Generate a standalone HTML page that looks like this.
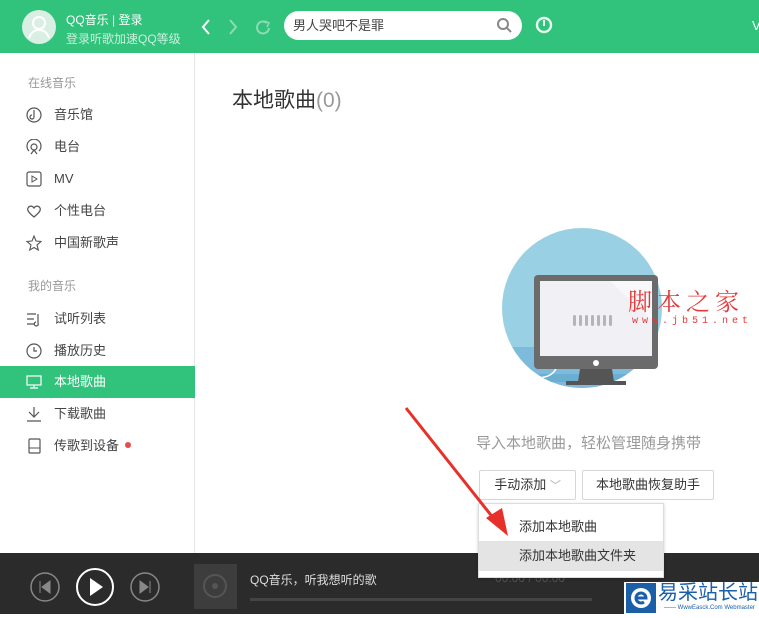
<!DOCTYPE html>
<html><head><meta charset="utf-8"><style>
*{margin:0;padding:0;box-sizing:border-box}
body{width:759px;height:614px;overflow:hidden;position:relative;background:#fff;font-family:"Liberation Sans","Noto Sans CJK SC",sans-serif;color:#333}
.hd{position:absolute;left:0;top:0;width:759px;height:53px;background:#31c27c}
.av{position:absolute;left:22px;top:10px;width:34px;height:34px;border-radius:50%;background:#d9efe4}
.side{position:absolute;left:0;top:53px;width:195px;height:500px;border-right:1px solid #e6e6e6;background:#fff}
.sec{position:absolute;left:28px;font-size:12px;color:#999}
.it{position:absolute;left:0;width:195px;height:32px;font-size:13px;line-height:32px;padding-left:54px;color:#444}
.it svg{position:absolute;left:26px;top:8px}
.act{background:#31c27c;color:#fff}
.ft{position:absolute;left:0;top:553px;width:759px;height:61px;background:#2b2b2b}
.btn{position:absolute;border:1px solid #d6d6d6;border-radius:2px;font-size:13px;line-height:28px;text-align:center;background:#fff;color:#333}
</style></head><body>
<div class="hd">
<div class="av"><svg width="34" height="34"><circle cx="17" cy="13" r="6" fill="none" stroke="#fff" stroke-width="2"/><path d="M7 28c2-6 6-8 10-8s8 2 10 8" fill="none" stroke="#fff" stroke-width="2"/></svg></div>
<div style="position:absolute;left:66px;top:11px;font-size:12px;color:#fff">QQ音乐 | 登录</div>
<div style="position:absolute;left:66px;top:30px;font-size:12px;color:#c8f0dc">登录听歌加速QQ等级</div>
<svg style="position:absolute;left:198px;top:17px" width="80" height="20"><path d="M11 3l-6 7 6 7" fill="none" stroke="#fff" stroke-width="2"/><path d="M32 3l6 7-6 7" fill="none" stroke="#8ddcb5" stroke-width="2"/><path d="M69 6a6 6 0 1 0 2 5" fill="none" stroke="#8ddcb5" stroke-width="2"/><path d="M67 4l4 2-2 4" fill="none" stroke="#8ddcb5" stroke-width="1.5"/></svg>
<div style="position:absolute;left:284px;top:11px;width:238px;height:29px;border-radius:15px;background:#fff;font-size:13px;line-height:29px;padding-left:9px;color:#444">男人哭吧不是罪</div>
<svg style="position:absolute;left:496px;top:17px" width="16" height="16"><circle cx="7" cy="7" r="5" fill="none" stroke="#888" stroke-width="2"/><path d="M11 11l4 4" stroke="#888" stroke-width="2"/></svg>
<svg style="position:absolute;left:535px;top:16px" width="18" height="20"><circle cx="9" cy="9" r="7" fill="none" stroke="#e8fff2" stroke-width="2.4"/><path d="M9 4v6" stroke="#e8fff2" stroke-width="2"/></svg>
<div style="position:absolute;left:752px;top:18px;font-size:13px;color:#fff">V</div>
</div>
<div class="side">
<div class="sec" style="top:21px">在线音乐</div>
<div class="it" style="top:46px"><svg width="16" height="16"><circle cx="8" cy="8" r="7" fill="none" stroke="#555" stroke-width="1.2"/><path d="M8 3v7a2 2 0 1 1-2-2" fill="none" stroke="#555" stroke-width="1.2"/></svg>音乐馆</div>
<div class="it" style="top:78px"><svg width="16" height="16"><path d="M3 12a7 7 0 1 1 10 0" fill="none" stroke="#555" stroke-width="1.2"/><circle cx="8" cy="8" r="3" fill="none" stroke="#555" stroke-width="1.2"/><path d="M5 15l3-4 3 4" fill="none" stroke="#555" stroke-width="1.2"/></svg>电台</div>
<div class="it" style="top:110px"><svg width="16" height="16"><rect x="1" y="1" width="14" height="14" rx="2" fill="none" stroke="#555" stroke-width="1.2"/><path d="M6 5l5 3-5 3z" fill="none" stroke="#555"/></svg>MV</div>
<div class="it" style="top:142px"><svg width="16" height="16"><path d="M8 14C2 9 1 7 2 5s4-3 6 0c2-3 5-2 6 0s0 4-6 9z" fill="none" stroke="#555" stroke-width="1.2"/></svg>个性电台</div>
<div class="it" style="top:174px"><svg width="16" height="16"><path d="M8 1l2 5 5 .5-4 3.5 1.3 5L8 12.5 3.7 15 5 10 1 6.5 6 6z" fill="none" stroke="#555" stroke-width="1.1"/></svg>中国新歌声</div>
<div class="sec" style="top:224px">我的音乐</div>
<div class="it" style="top:250px"><svg width="16" height="16"><path d="M1 3h9M1 8h7M1 13h7M12 3v9a2 2 0 1 1-2-1" fill="none" stroke="#555" stroke-width="1.2"/></svg>试听列表</div>
<div class="it" style="top:282px"><svg width="16" height="16"><circle cx="8" cy="8" r="7" fill="none" stroke="#555" stroke-width="1.2"/><path d="M8 4v4h3" fill="none" stroke="#555" stroke-width="1.2"/></svg>播放历史</div>
<div class="it act" style="top:313px"><svg width="16" height="16"><rect x="1" y="2" width="14" height="9" fill="none" stroke="#fff" stroke-width="1.2"/><path d="M8 11v3M4 14h8" stroke="#fff" stroke-width="1.2"/></svg>本地歌曲</div>
<div class="it" style="top:345px"><svg width="16" height="16"><path d="M8 1v10M3 6l5 5 5-5M1 15h14" fill="none" stroke="#555" stroke-width="1.2"/></svg>下载歌曲</div>
<div class="it" style="top:377px"><svg width="16" height="16"><rect x="3" y="1" width="11" height="14" rx="1" fill="none" stroke="#555" stroke-width="1.2"/><path d="M3 10h11" stroke="#555"/></svg>传歌到设备<span style="display:inline-block;width:6px;height:6px;border-radius:50%;background:#e74c4c;margin-left:6px;vertical-align:2px"></span></div>
</div>
<div style="position:absolute;left:232px;top:84px;font-size:21px;color:#333">本地歌曲<span style="color:#999">(0)</span></div>
<svg style="position:absolute;left:500px;top:227px" width="165" height="165">
<defs><clipPath id="c"><circle cx="82" cy="81" r="80"/></clipPath></defs>
<circle cx="82" cy="81" r="80" fill="#99d0e4"/>
<g clip-path="url(#c)"><rect x="0" y="120" width="165" height="50" fill="#7dbadb"/><path d="M30 155h120l-8-8H40z" fill="#6aaed2"/><path d="M0 148c20 0 40 6 50 0s5-14 10-14" fill="none" stroke="#fff" stroke-width="1.5"/></g>
<rect x="34" y="48" width="124" height="94" rx="4" fill="#6b6b6b"/>
<rect x="40" y="54" width="112" height="75" fill="#f1f1f5"/>
<path d="M110 54h42v40z" fill="#fff" opacity=".5"/>
<g fill="#b5b5b5"><rect x="73" y="88" width="3" height="11" rx="1.5"/><rect x="79" y="88" width="3" height="11" rx="1.5"/><rect x="85" y="88" width="3" height="11" rx="1.5"/><rect x="91" y="88" width="3" height="11" rx="1.5"/><rect x="97" y="88" width="3" height="11" rx="1.5"/><rect x="103" y="88" width="3" height="11" rx="1.5"/><rect x="109" y="88" width="3" height="11" rx="1.5"/></g>
<circle cx="96" cy="136" r="3" fill="#fff"/>
<path d="M80 142h32l2 13H78z" fill="#555"/><rect x="66" y="154" width="60" height="4" fill="#555"/>
</svg>
<div style="position:absolute;left:628px;top:282px;font-size:24px;color:#e23b3b;letter-spacing:5px;font-family:'Noto Serif CJK SC',serif">脚本之家</div>
<div style="position:absolute;left:632px;top:316px;font-size:10px;color:#e23b3b;letter-spacing:4px;font-family:'Liberation Mono',monospace">www.jb51.net</div>
<div style="position:absolute;left:476px;top:432px;font-size:15px;color:#999">导入本地歌曲，轻松管理随身携带</div>
<div class="btn" style="left:479px;top:470px;width:97px;height:30px">手动添加 <span style="color:#aaa;font-size:11px">﹀</span></div>
<div class="btn" style="left:582px;top:470px;width:132px;height:30px">本地歌曲恢复助手</div>
<div class="ft">
<svg style="position:absolute;left:28px;top:14px" width="140" height="40"><circle cx="17" cy="20" r="14" fill="none" stroke="#888" stroke-width="1.5"/><path d="M12 14v12M22 14l-8 6 8 6z" fill="#888" stroke="#888"/><circle cx="67" cy="20" r="18" fill="none" stroke="#fff" stroke-width="2"/><path d="M62 11l13 9-13 9z" fill="#fff"/><circle cx="117" cy="20" r="14" fill="none" stroke="#888" stroke-width="1.5"/><path d="M122 14v12M112 14l8 6-8 6z" fill="#888" stroke="#888"/></svg>
<div style="position:absolute;left:194px;top:11px;width:43px;height:45px;background:#3d3d3d"><svg width="43" height="45"><circle cx="21" cy="22" r="11" fill="none" stroke="#555" stroke-width="2"/><circle cx="21" cy="22" r="3" fill="#555"/></svg></div>
<div style="position:absolute;left:250px;top:18px;font-size:12px;color:#ddd">QQ音乐，听我想听的歌</div>
<div style="position:absolute;left:250px;top:45px;width:342px;height:3px;background:#444"></div>
<div style="position:absolute;left:495px;top:18px;font-size:12px;color:#555">00:00 / 00:00</div>
</div>
<div style="position:absolute;left:478px;top:503px;width:186px;height:75px;background:#fff;border:1px solid #ddd;box-shadow:0 1px 3px rgba(0,0,0,.2)">
<div style="position:absolute;left:40px;top:12px;font-size:13px;color:#333">添加本地歌曲</div>
<div style="position:absolute;left:0;top:37px;width:184px;height:30px;background:#e4e4e4;font-size:13px;line-height:30px;padding-left:40px;color:#333">添加本地歌曲文件夹</div>
</div>
<svg style="position:absolute;left:400px;top:400px" width="120" height="150"><path d="M6 8L98 124" stroke="#e8302a" stroke-width="3"/><path d="M86 118l22 18-6-28z" fill="#e8302a"/></svg>
<div style="position:absolute;left:624px;top:582px;width:135px;height:32px;background:#fff">
<div style="position:absolute;left:2px;top:1px;width:30px;height:30px;background:#1a5fa8"><svg width="30" height="30"><circle cx="15" cy="15" r="10" fill="#fff"/><path d="M9 15h11a5 5 0 1 0-2 4" fill="none" stroke="#1a5fa8" stroke-width="3"/></svg></div>
<div style="position:absolute;left:34px;top:-1px;font-size:20px;color:#1a5fa8;line-height:24px;white-space:nowrap">易采站长站</div>
<div style="position:absolute;left:40px;top:23px;font-size:6px;color:#1a5fa8;white-space:nowrap">—— WwwEasck.Com Webmaster</div>
</div>
</body></html>
